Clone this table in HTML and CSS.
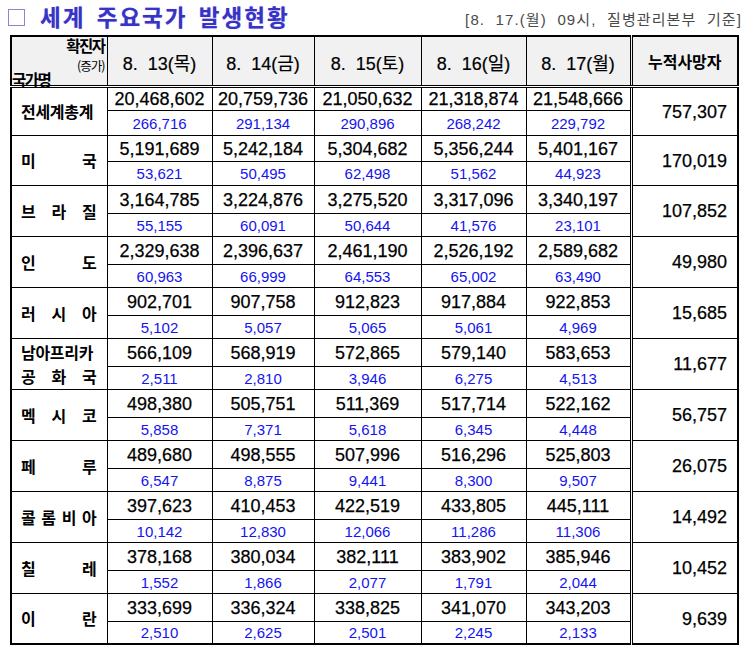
FILE: index.html
```html
<!DOCTYPE html>
<html lang="ko">
<head>
<meta charset="utf-8">
<title>세계 주요국가 발생현황</title>
<link rel="stylesheet" href="styles.css">
</head>
<body>
<div class="page">
  <div class="titlebar">
    <h1 class="title"><span class="box"></span>세계 주요국가 발생현황</h1>
    <div class="source">[8.&nbsp; 17.(월)&nbsp; 09시,&nbsp; 질병관리본부&nbsp; 기준]</div>
  </div>
  <table class="stats">
    <colgroup>
      <col class="c-name">
      <col class="c-d1">
      <col class="c-d2">
      <col class="c-d3">
      <col class="c-d4">
      <col class="c-d5">
      <col class="c-death">
    </colgroup>
    <thead>
      <tr>
        <th class="corner">
          <div class="corner-in">
            <span class="c-top">확진자</span>
            <span class="c-mid">(증가)</span>
            <span class="c-bot">국가명</span>
          </div>
        </th>
        <th class="date">8.&nbsp; 13(목)</th>
        <th class="date">8.&nbsp; 14(금)</th>
        <th class="date">8.&nbsp; 15(토)</th>
        <th class="date">8.&nbsp; 16(일)</th>
        <th class="date">8.&nbsp; 17(월)</th>
        <th class="death-h">누적사망자</th>
      </tr>
    </thead>
    <tbody>
      <tr class="top r1"><th rowspan="2" class="country">전세계총계</th><td>20,468,602</td><td>20,759,736</td><td>21,050,632</td><td>21,318,874</td><td>21,548,666</td><td rowspan="2" class="death">757,307</td></tr>
      <tr class="bot r1"><td>266,716</td><td>291,134</td><td>290,896</td><td>268,242</td><td>229,792</td></tr>

      <tr class="top r2"><th rowspan="2" class="country">미 국</th><td>5,191,689</td><td>5,242,184</td><td>5,304,682</td><td>5,356,244</td><td>5,401,167</td><td rowspan="2" class="death">170,019</td></tr>
      <tr class="bot r2"><td>53,621</td><td>50,495</td><td>62,498</td><td>51,562</td><td>44,923</td></tr>

      <tr class="top"><th rowspan="2" class="country">브 라 질</th><td>3,164,785</td><td>3,224,876</td><td>3,275,520</td><td>3,317,096</td><td>3,340,197</td><td rowspan="2" class="death">107,852</td></tr>
      <tr class="bot"><td>55,155</td><td>60,091</td><td>50,644</td><td>41,576</td><td>23,101</td></tr>

      <tr class="top"><th rowspan="2" class="country">인 도</th><td>2,329,638</td><td>2,396,637</td><td>2,461,190</td><td>2,526,192</td><td>2,589,682</td><td rowspan="2" class="death">49,980</td></tr>
      <tr class="bot"><td>60,963</td><td>66,999</td><td>64,553</td><td>65,002</td><td>63,490</td></tr>

      <tr class="top"><th rowspan="2" class="country">러 시 아</th><td>902,701</td><td>907,758</td><td>912,823</td><td>917,884</td><td>922,853</td><td rowspan="2" class="death">15,685</td></tr>
      <tr class="bot"><td>5,102</td><td>5,057</td><td>5,065</td><td>5,061</td><td>4,969</td></tr>

      <tr class="top"><th rowspan="2" class="country two"><span class="ln">남아프리카</span><span class="ln">공 화 국</span></th><td>566,109</td><td>568,919</td><td>572,865</td><td>579,140</td><td>583,653</td><td rowspan="2" class="death">11,677</td></tr>
      <tr class="bot"><td>2,511</td><td>2,810</td><td>3,946</td><td>6,275</td><td>4,513</td></tr>

      <tr class="top"><th rowspan="2" class="country">멕 시 코</th><td>498,380</td><td>505,751</td><td>511,369</td><td>517,714</td><td>522,162</td><td rowspan="2" class="death">56,757</td></tr>
      <tr class="bot"><td>5,858</td><td>7,371</td><td>5,618</td><td>6,345</td><td>4,448</td></tr>

      <tr class="top"><th rowspan="2" class="country">페 루</th><td>489,680</td><td>498,555</td><td>507,996</td><td>516,296</td><td>525,803</td><td rowspan="2" class="death">26,075</td></tr>
      <tr class="bot"><td>6,547</td><td>8,875</td><td>9,441</td><td>8,300</td><td>9,507</td></tr>

      <tr class="top"><th rowspan="2" class="country">콜 롬 비 아</th><td>397,623</td><td>410,453</td><td>422,519</td><td>433,805</td><td>445,111</td><td rowspan="2" class="death">14,492</td></tr>
      <tr class="bot"><td>10,142</td><td>12,830</td><td>12,066</td><td>11,286</td><td>11,306</td></tr>

      <tr class="top"><th rowspan="2" class="country">칠 레</th><td>378,168</td><td>380,034</td><td>382,111</td><td>383,902</td><td>385,946</td><td rowspan="2" class="death">10,452</td></tr>
      <tr class="bot"><td>1,552</td><td>1,866</td><td>2,077</td><td>1,791</td><td>2,044</td></tr>

      <tr class="top"><th rowspan="2" class="country">이 란</th><td>333,699</td><td>336,324</td><td>338,825</td><td>341,070</td><td>343,203</td><td rowspan="2" class="death">9,639</td></tr>
      <tr class="bot"><td>2,510</td><td>2,625</td><td>2,501</td><td>2,245</td><td>2,133</td></tr>
    </tbody>
  </table>
</div>
</body>
</html>
```

FILE: styles.css
```css
* { box-sizing: border-box; }

body {
  margin: 0;
  background: #ffffff;
  font-family: "Liberation Sans", "Noto Sans CJK KR", sans-serif;
  color: #000;
}

.page {
  width: 748px;
  padding: 0 8px 0 10px;
}

.titlebar {
  display: flex;
  justify-content: space-between;
  align-items: flex-end;
  height: 35px;
  padding-bottom: 6px;
}

.title {
  margin: 0;
  display: flex;
  align-items: center;
  font-family: "Noto Sans CJK KR", sans-serif;
  font-size: 22.5px;
  font-weight: 700;
  line-height: 26px;
  letter-spacing: 2px;
  word-spacing: 3px;
  color: #3434c6;
  text-shadow: 0 0 1px rgba(120, 60, 200, 0.5);
}

.box {
  display: inline-block;
  width: 17px;
  height: 17px;
  margin: 2px 15px 0 -2px;
  border: 1.5px solid #8a84d8;
  background: #fff;
}

.source {
  font-family: "Liberation Sans", "Noto Sans CJK KR", sans-serif;
  font-size: 15px;
  line-height: 18px;
  color: #4a4a4a;
  letter-spacing: 1.1px;
  margin-right: -2px;
}

.stats {
  border-collapse: collapse;
  table-layout: fixed;
  width: 729px;
  border: 2px solid #000;
}

.c-name { width: 96px; }
.c-d1 { width: 105px; }
.c-d2 { width: 102px; }
.c-d3 { width: 107px; }
.c-d4 { width: 105px; }
.c-d5 { width: 105px; }
.c-death { width: 107px; }

.stats th,
.stats td {
  border: 1px solid #000;
  padding: 0;
  text-align: center;
  vertical-align: middle;
}

.stats thead tr { height: 50px; }

.stats thead th {
  background: #f1f1f1;
  border-bottom: 3px double #000;
  font-weight: 400;
  font-size: 18px;
}

.stats .date {
  font-family: "Liberation Sans", "Noto Sans CJK KR", sans-serif;
  font-size: 18px;
  padding-top: 2px;
  -webkit-text-stroke: 0.2px #000;
}

.stats .death-h {
  font-family: "Noto Sans CJK KR", sans-serif;
  font-weight: 700;
  font-size: 16px;
  border-left: 3px double #000;
}

.corner {
  background: #f1f1f1 linear-gradient(to top right, transparent calc(50% - 0.7px), #000 50%, transparent calc(50% + 0.7px));
}

.corner-in {
  display: flex;
  flex-direction: column;
  height: 47px;
  padding: 0 2px 0 0;
  font-family: "Noto Sans CJK KR", sans-serif;
  line-height: 1;
}

.c-top {
  align-self: flex-end;
  font-weight: 700;
  font-size: 15.5px;
  letter-spacing: -1.5px;
  margin-top: 1px;
}

.c-mid {
  align-self: flex-end;
  font-size: 12.5px;
  letter-spacing: -1px;
  margin-top: 6px;
}

.c-bot {
  align-self: flex-start;
  font-weight: 700;
  font-size: 15.5px;
  letter-spacing: -1.5px;
  margin-top: auto;
  margin-bottom: 1px;
}

.stats tr.top { height: 28px; }
.stats tr.bot { height: 23px; }
.stats tr.top.r1 { height: 24px; }
.stats tr.bot.r1 { height: 25px; }
.stats tr.top.r2 { height: 26px; }
.stats tr.bot.r2 { height: 24px; }

.stats tr.top td {
  font-size: 18px;
  line-height: 20px;
  color: #000;
  padding-top: 1px;
  -webkit-text-stroke: 0.25px #000;
}

.stats tr.bot td {
  font-size: 15px;
  line-height: 18px;
  color: #1414f0;
  padding-top: 2px;
}

.stats .country {
  font-family: "Noto Sans CJK KR", sans-serif;
  font-weight: 700;
  font-size: 16px;
  line-height: 20px;
  padding: 0 10px 0 9px;
  text-align: justify;
  text-align-last: justify;
  letter-spacing: -0.3px;
}

.stats .country.two .ln {
  display: block;
  line-height: 24px;
}

.stats td.death {
  font-size: 19px;
  text-align: right;
  padding-right: 10px;
  border-left: 3px double #000;
  -webkit-text-stroke: 0.25px #000;
}
```
